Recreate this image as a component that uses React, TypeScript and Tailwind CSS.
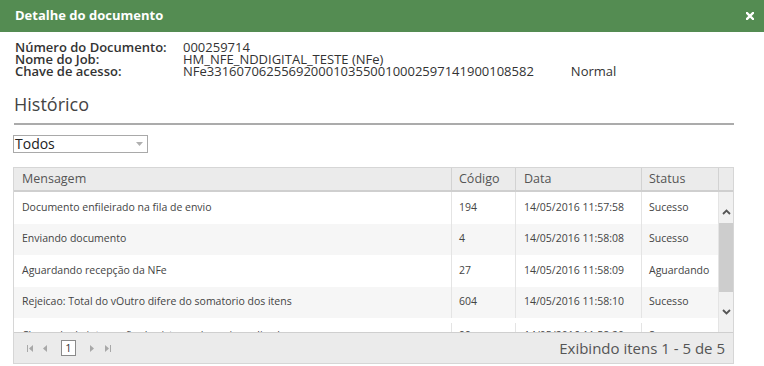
import React from "react";

const rows = [
  { m: "Documento enfileirado na fila de envio", c: "194", d: "14/05/2016 11:57:58", s: "Sucesso" },
  { m: "Enviando documento", c: "4", d: "14/05/2016 11:58:08", s: "Sucesso" },
  { m: "Aguardando recepção da NFe", c: "27", d: "14/05/2016 11:58:09", s: "Aguardando" },
  { m: "Rejeicao: Total do vOutro difere do somatorio dos itens", c: "604", d: "14/05/2016 11:58:10", s: "Sucesso" },
  { m: "Chamada de integração do sistema de envio realizada", c: "99", d: "14/05/2016 11:58:20", s: "Sucesso" },
];

function Tri({ dir }: { dir: "l" | "r" }) {
  return (
    <svg width="5" height="7" viewBox="0 0 5 7">
      {dir === "l" ? <path d="M4 0 L0 3.5 L4 7 Z" fill="#a8a8a8" /> : <path d="M1 0 L5 3.5 L1 7 Z" fill="#a8a8a8" />}
    </svg>
  );
}

export default function App() {
  return (
    <div className="w-[764px] h-[366px] bg-white overflow-hidden text-[#333]" style={{ fontFamily: '"Open Sans", sans-serif' }}>
      <div className="h-[32px] bg-[#548c52] flex items-center justify-between pl-[15px] pr-[10px]">
        <span className="text-white text-[13px] font-bold">Detalhe do documento</span>
        <svg width="8" height="8" viewBox="0 0 8 8">
          <path d="M1 1 L7 7 M7 1 L1 7" stroke="#fff" strokeWidth="2.4" strokeLinecap="square" />
        </svg>
      </div>
      <div className="px-[13px]">
        <div className="pt-[9px] pl-[2px] text-[13px] leading-[12px]">
          <div className="flex"><span className="w-[168px] font-semibold">Número do Documento:</span><span>000259714</span></div>
          <div className="flex"><span className="w-[168px] font-semibold">Nome do Job:</span><span>HM_NFE_NDDIGITAL_TESTE (NFe)</span></div>
          <div className="flex"><span className="w-[168px] font-semibold">Chave de acesso:</span><span>NFe33160706255692000103550010002597141900108582</span><span className="ml-[37px]">Normal</span></div>
        </div>
        <div className="pl-[1px] pt-[15px] text-[18px] leading-[24px] text-[#444]">Histórico</div>
        <div className="mt-[7px] h-[2px] bg-[#ababab] ml-[1px] w-[720px]" />
        <div className="mt-[10px] w-[135px] h-[18px] border border-[#a9a9a9] flex items-center justify-between pl-[1px] pr-[4px]">
          <span className="text-[14px] leading-[16px] text-[#222]">Todos</span>
          <svg width="7" height="4" viewBox="0 0 7 4"><path d="M0 0 L7 0 L3.5 4 Z" fill="#b0b0b0" /></svg>
        </div>
        <div className="mt-[14px] w-[721px] border border-[#d6d6d6]">
          <div className="flex h-[24px] bg-[#ebebeb] border-b-2 border-[#cfcfcf] text-[12.5px] text-[#555]">
            <div className="w-[437px] pl-[8px] flex items-center">Mensagem</div>
            <div className="w-[64px] pl-[7px] flex items-center border-l border-[#d2d2d2]">Código</div>
            <div className="w-[126px] pl-[8px] flex items-center border-l border-[#d2d2d2]">Data</div>
            <div className="w-[77px] pl-[7px] flex items-center border-l border-[#d2d2d2]">Status</div>
            <div className="flex-1 border-l border-[#d2d2d2]" />
          </div>
          <div className="flex h-[140px] overflow-hidden">
            <div className="w-[704px]">
              {rows.map((r, i) => (
                <div key={i} className={`flex h-[31.5px] text-[10.5px] text-[#444] ${i % 2 === 1 ? "bg-[#f6f6f6]" : "bg-white"} ${i === 4 ? "pt-[5px]" : ""}`}>
                  <div className="w-[437px] pl-[8px] flex items-center whitespace-nowrap">{r.m}</div>
                  <div className="w-[64px] pl-[7px] flex items-center border-l border-[#e4e4e4]">{r.c}</div>
                  <div className="w-[126px] pl-[8px] flex items-center border-l border-[#e4e4e4]">{r.d}</div>
                  <div className="w-[77px] pl-[7px] flex items-center border-l border-[#e4e4e4]">{r.s}</div>
                </div>
              ))}
            </div>
            <div className="flex-1 border-l border-[#e4e4e4] bg-[#f1f1f1] flex flex-col">
              <div className="h-[31px] flex justify-center pt-[17px]">
                <svg width="9" height="6" viewBox="0 0 9 6"><path d="M1 5 L4.5 1.5 L8 5" stroke="#555" strokeWidth="1.8" fill="none" /></svg>
              </div>
              <div className="h-[69px] bg-[#cdcdcd]" />
              <div className="flex justify-center pt-[17px]">
                <svg width="9" height="6" viewBox="0 0 9 6"><path d="M1 1 L4.5 4.5 L8 1" stroke="#555" strokeWidth="1.8" fill="none" /></svg>
              </div>
            </div>
          </div>
          <div className="h-[31px] bg-[#ebebeb] border-t border-[#cfcfcf] flex items-center justify-between pl-[13px] pr-[8px]">
            <div className="flex items-center">
              <div className="flex items-center gap-[1px]"><div className="w-[1px] h-[7px] bg-[#a8a8a8]" /><Tri dir="l" /></div>
              <div className="ml-[9px]"><Tri dir="l" /></div>
              <div className="ml-[13px] w-[15px] h-[16px] border border-[#8a8a8a] bg-white flex items-center justify-center text-[11px] text-[#333]">1</div>
              <div className="ml-[13px]"><Tri dir="r" /></div>
              <div className="ml-[10px] flex items-center gap-[1px]"><Tri dir="r" /><div className="w-[1px] h-[7px] bg-[#a8a8a8]" /></div>
            </div>
            <span className="text-[15px] text-[#555]">Exibindo itens 1 - 5 de 5</span>
          </div>
        </div>
      </div>
    </div>
  );
}
